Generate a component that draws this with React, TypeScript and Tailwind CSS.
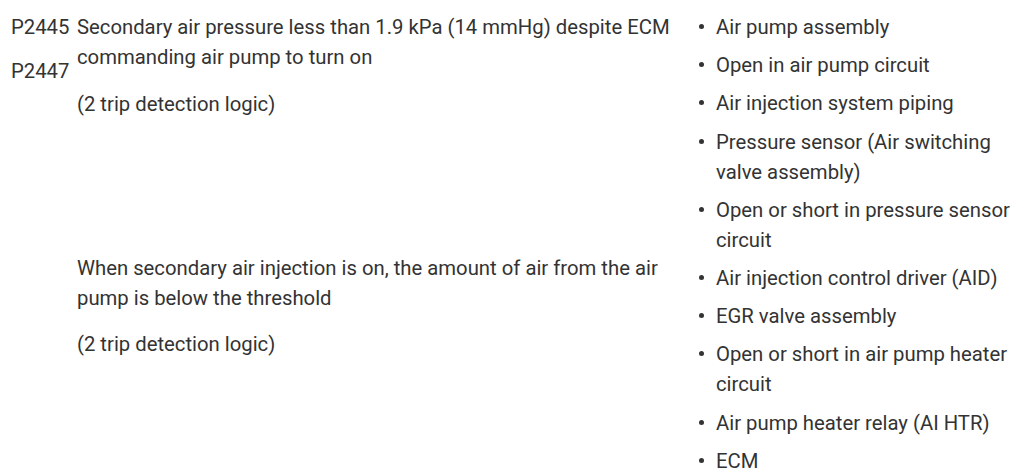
const causes = [
  "Air pump assembly",
  "Open in air pump circuit",
  "Air injection system piping",
  "Pressure sensor (Air switching valve assembly)",
  "Open or short in pressure sensor circuit",
  "Air injection control driver (AID)",
  "EGR valve assembly",
  "Open or short in air pump heater circuit",
  "Air pump heater relay (AI HTR)",
  "ECM",
];

export default function App() {
  return (
    <div className="h-[472px] w-[1022px] overflow-hidden bg-white font-['Roboto',sans-serif] text-[20.3px] leading-[30px] text-[#333333]">
      <div className="flex pt-[12px] pl-[11px]">
        {/* DTC codes */}
        <div className="w-[66px] shrink-0">
          <p>P2445</p>
          <p className="mt-[14px]">P2447</p>
        </div>

        {/* Detection condition */}
        <div className="w-[613px] shrink-0 pr-[8px]">
          <p>Secondary air pressure less than 1.9 kPa (14 mmHg) despite ECM commanding air pump to turn on</p>
          <p className="mt-[17px]">(2 trip detection logic)</p>
          <p className="mt-[134px]">When secondary air injection is on, the amount of air from the air pump is below the threshold</p>
          <p className="mt-[16px]">(2 trip detection logic)</p>
        </div>

        {/* Trouble areas */}
        <ul className="flex w-[320px] shrink-0 flex-col gap-[8.2px] pl-[9px]">
          {causes.map((c) => (
            <li key={c} className="flex">
              <span className="flex h-[30px] w-[17px] shrink-0 items-center">
                <span className="mt-[-1px] block h-[5px] w-[5px] rounded-full bg-[#333333]" />
              </span>
              <span className="w-[300px]">{c}</span>
            </li>
          ))}
        </ul>
      </div>
    </div>
  );
}
